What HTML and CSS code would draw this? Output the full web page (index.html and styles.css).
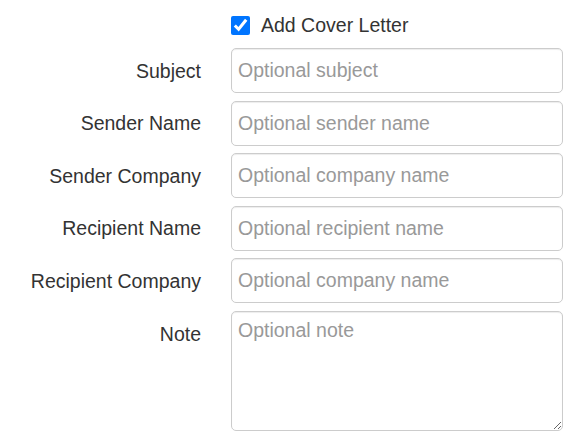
FILE: index.html
```html
<!DOCTYPE html>
<html lang="en">
<head>
<meta charset="utf-8">
<title>Cover Letter</title>
<link rel="stylesheet" href="styles.css">
</head>
<body>
<form class="form">
  <div class="row check-row">
    <span></span>
    <label class="check">
      <input type="checkbox" class="check-box" checked>
      <span class="check-text">Add Cover Letter</span>
    </label>
  </div>
  <div class="row">
    <label class="label" for="subject">Subject</label>
    <input class="control" id="subject" type="text" placeholder="Optional subject">
  </div>
  <div class="row">
    <label class="label" for="sname">Sender Name</label>
    <input class="control" id="sname" type="text" placeholder="Optional sender name">
  </div>
  <div class="row">
    <label class="label" for="scomp">Sender Company</label>
    <input class="control" id="scomp" type="text" placeholder="Optional company name">
  </div>
  <div class="row">
    <label class="label" for="rname">Recipient Name</label>
    <input class="control" id="rname" type="text" placeholder="Optional recipient name">
  </div>
  <div class="row">
    <label class="label" for="rcomp">Recipient Company</label>
    <input class="control" id="rcomp" type="text" placeholder="Optional company name">
  </div>
  <div class="row">
    <label class="label label-top" for="note">Note</label>
    <textarea class="control area" id="note" placeholder="Optional note"></textarea>
  </div>
</form>
</body>
</html>
```
FILE: styles.css
```css
html, body {
  margin: 0;
  padding: 0;
  background: #fff;
}
body {
  font-family: "Liberation Sans", Arial, sans-serif;
  font-size: 19.5px;
  line-height: 27px;
  color: #333;
}
.form {
  display: flex;
  flex-direction: column;
  gap: 7.5px;
  padding-top: 11px;
}
.row {
  display: grid;
  grid-template-columns: 201px 332px;
  column-gap: 30px;
}
.check-row {
  height: 28px;
  margin-bottom: 1.5px;
}
.check {
  display: flex;
  align-items: center;
  gap: 11px;
  cursor: pointer;
}
.check-box {
  width: 19px;
  height: 19px;
  margin: 0;
  accent-color: #0075ff;
}
.label {
  align-self: center;
  text-align: right;
  padding-top: 1px;
}
.label-top {
  align-self: start;
  padding-top: 10px;
}
.control {
  box-sizing: border-box;
  width: 332px;
  height: 45px;
  margin: 0;
  padding: 0 6px;
  font-family: inherit;
  font-size: 19.5px;
  line-height: 27px;
  color: #555;
  background: #fff;
  border: 1px solid #ccc;
  border-radius: 5px;
  box-shadow: inset 0 1px 1px rgba(0, 0, 0, 0.075);
  outline: none;
}
.control::placeholder {
  color: #999;
  opacity: 1;
}
.area {
  height: 120px;
  padding: 5px 6px;
  resize: vertical;
  display: block;
}
```
